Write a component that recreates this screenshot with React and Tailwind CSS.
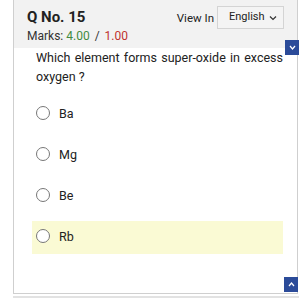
import React from 'react';

const options = ['Ba', 'Mg', 'Be', 'Rb'];

export default function App() {
  return (
    <div
      className="relative w-[299px] h-[300px] overflow-hidden bg-white"
      style={{ fontFamily: 'Roboto, "Noto Sans", sans-serif' }}
    >
      <div className="ml-[13px] w-[285px] h-[294px] border-l border-r border-b border-[#cfcfcf] flex flex-col">
        {/* HEADER */}
        <div className="h-[48px] bg-[#f2f2f2] flex justify-between pl-[13px] pr-[13px]">
          <div>
            <div className="mt-[8px] text-[15px] leading-[18px] font-bold text-[#222]">Q No. 15</div>
            <div className="mt-[3px] text-[12px] leading-[14px] text-[#333]">
              Marks: <span className="text-[#3f8a3f]">4.00</span>
              <span className="mx-[5px]">/</span>
              <span className="text-[#c0322e]">1.00</span>
            </div>
          </div>
          <div className="flex items-start pt-[6px] gap-[3px]">
            <span className="mt-[5px] text-[11.5px] leading-[14px] text-[#222]">View In</span>
            <div className="w-[67px] h-[23px] border border-[#d4d4d4] bg-[#f4f4f4] flex items-center justify-between pl-[11px] pr-[5px]">
              <span className="text-[11px] text-[#222]">English</span>
              <svg width="10" height="10" viewBox="0 0 10 10" fill="none" stroke="#333" strokeWidth="1.2">
                <path d="M2 3.5 L5 6.5 L8 3.5" />
              </svg>
            </div>
          </div>
        </div>

        {/* QUESTION */}
        <div className="pl-[22px] pr-[14px]">
          <p className="text-[12.5px] leading-[19px] text-[#222] text-justify" style={{ textAlignLast: 'left' }}>
            Which element forms super-oxide in excess oxygen ?
          </p>
          <div className="mt-[12px] flex flex-col gap-[8px]">
            {options.map((opt) => (
              <div
                key={opt}
                className={`h-[33px] -ml-[4px] pl-[4px] flex items-center gap-[9px] ${
                  opt === 'Rb' ? 'bg-[#fafad4]' : ''
                }`}
              >
                <div className="w-[14px] h-[14px] rounded-full border-[1.5px] border-[#777] bg-white -mt-[3px]" />
                <span className="text-[12.5px] text-[#222]">{opt}</span>
              </div>
            ))}
          </div>
        </div>
      </div>
      <div className="ml-[13px] mt-[2px] h-[2px] bg-[#e2e2e2]" />

      {/* SCROLL BUTTONS */}
      <div className="absolute left-[285px] top-[40px] w-[14px] h-[15px] bg-[#2b4b99] flex items-center justify-center">
        <svg width="7" height="5" viewBox="0 0 7 5" fill="none" stroke="#fff" strokeWidth="1.2">
          <path d="M1 1 L3.5 4 L6 1" />
        </svg>
      </div>
      <div className="absolute left-[284px] top-[277px] w-[14px] h-[15px] bg-[#2b4b99] flex items-center justify-center">
        <svg width="7" height="5" viewBox="0 0 7 5" fill="none" stroke="#fff" strokeWidth="1.2">
          <path d="M1 4 L3.5 1 L6 4" />
        </svg>
      </div>
    </div>
  );
}
